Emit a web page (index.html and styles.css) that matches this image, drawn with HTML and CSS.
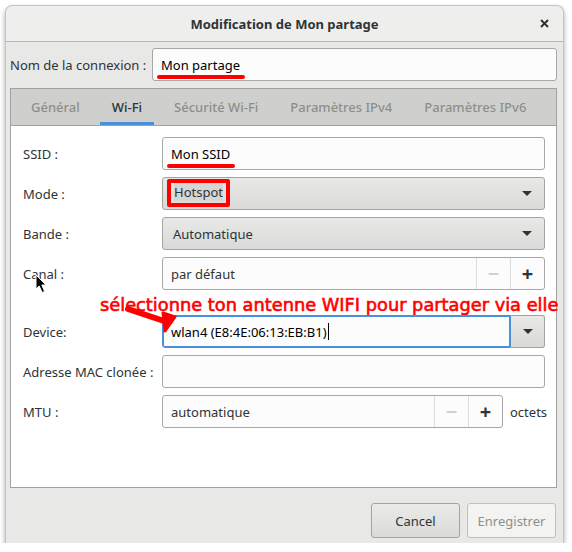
FILE: index.html
```html
<!DOCTYPE html>
<html>
<head>
    <meta charset="utf-8">
    <title>Modification de Mon partage</title>
    <link rel="stylesheet" href="styles.css">
</head>
<body>
    <div class="window">
        <header class="titlebar">
            <span class="title">Modification de Mon partage</span>
            <svg class="close" width="9" height="9" viewBox="0 0 9 9">
                <path d="M1 1 L8 8 M8 1 L1 8" stroke="#2e3436" stroke-width="2"/>
            </svg>
        </header>

        <div class="body">
            <div class="name-row">
                <label>Nom de la connexion :</label>
                <div class="entry name-entry"><span class="underlined">Mon partage</span></div>
            </div>

            <div class="notebook">
                <nav class="tabs">
                    <span class="tab">Général</span>
                    <span class="tab active">Wi-Fi</span>
                    <span class="tab">Sécurité Wi-Fi</span>
                    <span class="tab">Paramètres IPv4</span>
                    <span class="tab">Paramètres IPv6</span>
                </nav>

                <div class="page">
                    <div class="row">
                        <label>SSID :</label>
                        <div class="entry"><span class="underlined">Mon SSID</span></div>
                    </div>
                    <div class="row">
                        <label>Mode :</label>
                        <div class="combo"><span class="boxed"><span class="selected">Hotspot</span></span><span class="caret"></span></div>
                    </div>
                    <div class="row">
                        <label>Bande :</label>
                        <div class="combo"><span>Automatique</span><span class="caret"></span></div>
                    </div>
                    <div class="row">
                        <label>Canal :</label>
                        <div class="spin">
                            <span class="spin-text">par défaut</span>
                            <span class="spin-btn dim">&minus;</span>
                            <span class="spin-btn">+</span>
                        </div>
                    </div>

                    <div class="note">sélectionne ton antenne WIFI pour partager via elle</div>

                    <div class="row">
                        <label>Device:</label>
                        <div class="combo-entry">
                            <span class="ce-text">wlan4 (E8:4E:06:13:EB:B1)<i class="cursor-bar"></i></span>
                            <span class="ce-btn"><span class="caret"></span></span>
                        </div>
                    </div>
                    <div class="row">
                        <label>Adresse MAC clonée :</label>
                        <div class="entry"></div>
                    </div>
                    <div class="row">
                        <label>MTU :</label>
                        <div class="mtu">
                            <div class="spin">
                                <span class="spin-text">automatique</span>
                                <span class="spin-btn dim">&minus;</span>
                                <span class="spin-btn">+</span>
                            </div>
                            <span class="unit">octets</span>
                        </div>
                    </div>
                </div>
            </div>

            <div class="actions">
                <button class="btn">Cancel</button>
                <button class="btn disabled">Enregistrer</button>
            </div>
        </div>
    </div>

    <!-- annotation arrow drawn over the dialog -->
    <svg class="arrow" width="60" height="40" viewBox="0 0 60 40">
        <path d="M8 9 L44 21" stroke="#f00" stroke-width="6" stroke-linecap="round" fill="none"/>
        <path d="M43 13 L55 17 L45 31 Z" fill="#f00" stroke="#f00" stroke-width="3" stroke-linejoin="round"/>
    </svg>

    <!-- mouse pointer -->
    <svg class="pointer" width="14" height="22" viewBox="0 0 14 22">
        <path d="M1 1 L1 15 L4.2 12 L7.2 18.5 L9.6 17.4 L6.8 11 L11 11 Z" fill="#000" stroke="#fff" stroke-width="1" stroke-linejoin="round"/>
    </svg>
</body>
</html>
```

FILE: styles.css
```css
body {
    margin: 0;
    background-color: #ffffff;
    font-family: "Noto Sans", "DejaVu Sans", sans-serif;
    font-size: 13px;
    color: #2e3436;
}

.window {
    position: relative;
    margin: 5px 0 0 5px;
    width: 559px;
    height: 538px;
    display: flex;
    flex-direction: column;
    background-color: #e8e8e7;
    border: 1px solid #c4c4c2;
    border-bottom: none;
    border-radius: 7px 7px 0 0;
    box-shadow: 0 3px 5px rgba(0, 0, 0, 0.35);
    box-sizing: border-box;
}

.titlebar {
    height: 35px;
    flex: none;
    display: flex;
    align-items: center;
    justify-content: center;
    position: relative;
    background-color: #eeeeed;
    border-bottom: 1px solid #b6b6b3;
    border-radius: 7px 7px 0 0;
}

.title {
    font-weight: bold;
}

.close {
    position: absolute;
    right: 14px;
    top: 13px;
}

.body {
    flex: 1;
    display: flex;
    flex-direction: column;
    padding: 6px 6px 0 4px;
}

.name-row {
    display: flex;
    align-items: center;
    height: 33px;
}

.name-row label {
    width: 142px;
    flex: none;
}

.entry {
    flex: 1;
    height: 33px;
    box-sizing: border-box;
    display: flex;
    align-items: center;
    padding-left: 8px;
    background-color: #fcfcfc;
    border: 1px solid #a7a7a4;
    border-radius: 3px;
    color: #000;
}

.name-entry {
    padding-left: 8px;
}

.underlined {
    position: relative;
}

.underlined::after {
    content: "";
    position: absolute;
    left: -4px;
    right: -5px;
    bottom: -5px;
    height: 4px;
    border-radius: 2px;
    background-color: #ff0000;
}

.notebook {
    margin-top: 7px;
    height: 400px;
    display: flex;
    flex-direction: column;
    border: 1px solid #a1a1a1;
    background-color: #ffffff;
    box-sizing: border-box;
}

.tabs {
    height: 36px;
    flex: none;
    display: flex;
    padding-left: 4px;
    background-color: #cfcfcd;
    border-bottom: 1px solid #a1a1a1;
}

.tab {
    display: flex;
    align-items: center;
    padding: 0 12px;
    margin: 0 4px;
    color: #8d8f8b;
    font-weight: 500;
}

.tab.active {
    color: #2e3436;
    box-shadow: inset 0 -3px 0 #4a90d9;
}

.page {
    padding: 11px 11px 0 12px;
    display: flex;
    flex-direction: column;
    gap: 7px;
}

.row {
    display: flex;
    align-items: center;
    height: 33px;
}

.row > label {
    width: 139px;
    flex: none;
}

.combo {
    flex: 1;
    height: 33px;
    box-sizing: border-box;
    display: flex;
    align-items: center;
    justify-content: space-between;
    padding: 0 12px 0 10px;
    border: 1px solid #a3a3a0;
    border-radius: 3px;
    background: linear-gradient(#e9e9e8, #d9d9d7);
}

.boxed {
    position: relative;
    top: -1px;
    margin-left: -6px;
    padding: 2px 3px 3px;
    border: 4px solid #ff0000;
    border-radius: 2px;
    line-height: 15px;
}

.selected {
    background-color: #d6d6d4;
}

.caret {
    width: 0;
    height: 0;
    border-left: 5px solid transparent;
    border-right: 5px solid transparent;
    border-top: 5px solid #2e3436;
}

.spin {
    flex: 1;
    height: 33px;
    box-sizing: border-box;
    display: flex;
    background-color: #fcfcfc;
    border: 1px solid #a7a7a4;
    border-radius: 3px;
}

.spin-text {
    flex: 1;
    display: flex;
    align-items: center;
    padding-left: 8px;
}

.spin-btn {
    width: 33px;
    display: flex;
    align-items: center;
    justify-content: center;
    border-left: 1px solid #dcdcda;
    font-size: 20px;
    font-weight: bold;
    color: #2e3436;
}

.spin-btn.dim {
    color: #d0d0ce;
}

.note {
    height: 12px;
    margin: -3px 0 2px 77px;
    white-space: nowrap;
    font-family: "DejaVu Sans", sans-serif;
    font-size: 17.8px;
    line-height: 22px;
    color: #ff0000;
    -webkit-text-stroke: 0.6px #ff0000;
}

.combo-entry {
    flex: 1;
    height: 33px;
    display: flex;
}

.ce-text {
    flex: 1;
    display: flex;
    align-items: center;
    padding-left: 8px;
    border: 1px solid #4a90d9;
    border-radius: 3px 0 0 3px;
    background-color: #fcfcfc;
    box-shadow: inset 0 0 0 1px #4a90d9;
    color: #000;
}

.cursor-bar {
    width: 1px;
    height: 17px;
    margin-left: 1px;
    background-color: #000;
}

.ce-btn {
    width: 33px;
    display: flex;
    align-items: center;
    justify-content: center;
    border: 1px solid #a3a3a0;
    border-left: none;
    border-radius: 0 3px 3px 0;
    background: linear-gradient(#e9e9e8, #d9d9d7);
}

.mtu {
    flex: 1;
    display: flex;
    align-items: center;
    height: 33px;
}

.mtu .spin {
    flex: none;
    width: 341px;
}

.unit {
    margin-left: 7px;
}

.actions {
    flex: 1;
    display: flex;
    justify-content: flex-end;
    align-items: flex-start;
    gap: 7px;
    padding: 15px 1px 0 0;
}

.btn {
    width: 89px;
    height: 35px;
    font: inherit;
    color: #2e3436;
    border: 1px solid #a3a3a0;
    border-radius: 3px;
    background: linear-gradient(#ebebea, #dadad8);
}

.btn.disabled {
    color: #8d8f8b;
    background: #f3f3f2;
    border-color: #bfbfbd;
}

.arrow {
    position: absolute;
    left: 120px;
    top: 300px;
}

.pointer {
    position: absolute;
    left: 35px;
    top: 274px;
}
```
